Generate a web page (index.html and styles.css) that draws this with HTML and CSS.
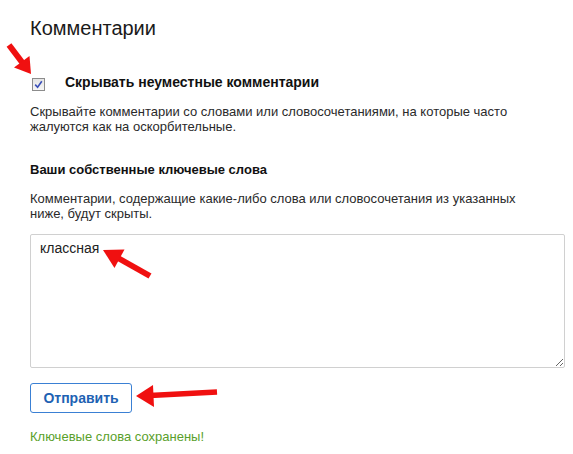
FILE: index.html
```html
<html>
<head>
  <meta charset="UTF-8">
  <meta name="viewport" content="width=device-width, initial-scale=1.0">
  <title>Комментарии</title>
  <link rel="stylesheet" href="styles.css">
</head>
<body>
  <div class="page">
    <h1 class="title">Комментарии</h1>

    <label class="option">
      <span class="checkbox">
        <svg width="9" height="9" viewBox="0 0 9 9">
          <path d="M1.2 4.6 L3.6 7.2 L7.8 1.2" fill="none" stroke="#3a4fb8" stroke-width="1.6"/>
        </svg>
      </span>
      <span class="option-label">Скрывать неуместные комментарии</span>
    </label>

    <p class="desc desc-first">Скрывайте комментарии со словами или словосочетаниями, на которые часто жалуются как на оскорбительные.</p>

    <h2 class="subtitle">Ваши собственные ключевые слова</h2>
    <p class="desc">Комментарии, содержащие какие-либо слова или словосочетания из указанных ниже, будут скрыты.</p>

    <form id="keywordsForm">
      <textarea class="keywords">классная</textarea>
      <button type="submit" class="btn">Отправить</button>
    </form>

    <p class="saved">Ключевые слова сохранены!</p>
  </div>

  <!-- red arrows drawn over the screenshot -->
  <svg class="arrows" width="573" height="454" viewBox="0 0 573 454">
    <g fill="#f01010" stroke="#f01010">
      <line x1="9" y1="45" x2="23" y2="63.5" stroke-width="6"/>
      <polygon points="31,74 14,67.5 29.5,56" stroke="none"/>

      <line x1="150" y1="276" x2="118" y2="258" stroke-width="6"/>
      <polygon points="103,250 114.5,268 124.5,249.5" stroke="none"/>

      <line x1="217" y1="392" x2="150" y2="395.5" stroke-width="5.5"/>
      <polygon points="136,396 153,385 154,407" stroke="none"/>
    </g>
  </svg>
</body>
</html>
```

FILE: styles.css
```css
body {
    margin: 0;
    padding: 0;
    font-family: 'Liberation Sans', Arial, sans-serif;
    background-color: #ffffff;
    color: #222222;
}

.page {
    padding: 16px 8px 0 30px;
}

.title {
    margin: 0;
    font-size: 20px;
    font-weight: normal;
    line-height: 24px;
    color: #1a1a1a;
}

/* Checkbox row */
.option {
    display: flex;
    align-items: flex-start;
    margin-top: 34px;
    line-height: 16px;
}

.checkbox {
    display: flex;
    align-items: center;
    justify-content: center;
    box-sizing: border-box;
    width: 13px;
    height: 13px;
    margin: 4px 0 0 2px;
    border: 1px solid #8c8c8c;
    background: linear-gradient(#e4e4e4, #f6f6f6);
}

.option-label {
    margin-left: 20px;
    font-size: 14px;
    font-weight: bold;
    color: #111111;
}

/* Texts */
.desc {
    max-width: 505px;
    margin: 14px 0 0;
    font-size: 13px;
    line-height: 15px;
    color: #2a2a2a;
}

.desc-first {
    margin-top: 13px;
}

.subtitle {
    margin: 28px 0 0;
    font-size: 13px;
    font-weight: bold;
    line-height: 15px;
    color: #111111;
}

/* Form */
form {
    display: flex;
    flex-direction: column;
    align-items: flex-start;
}

.keywords {
    box-sizing: border-box;
    width: 535px;
    height: 134px;
    margin-top: 13px;
    padding: 5px 9px;
    border: 1px solid #d0d0d0;
    border-radius: 2px;
    font-family: 'Liberation Sans', Arial, sans-serif;
    font-size: 14px;
    line-height: 17px;
    color: #222222;
    resize: vertical;
}

.keywords:focus {
    outline: none;
}

.btn {
    box-sizing: border-box;
    width: 102px;
    height: 30px;
    margin-top: 15px;
    padding: 0;
    background-color: #ffffff;
    border: 1px solid #3a80d4;
    border-radius: 3px;
    font-family: 'Liberation Sans', Arial, sans-serif;
    font-size: 14px;
    font-weight: bold;
    color: #1e62b3;
    cursor: pointer;
}

.saved {
    margin: 13px 0 0;
    font-size: 13px;
    line-height: 15px;
    color: #5a9f2b;
}

.arrows {
    position: absolute;
    top: 0;
    left: 0;
    pointer-events: none;
}
```
